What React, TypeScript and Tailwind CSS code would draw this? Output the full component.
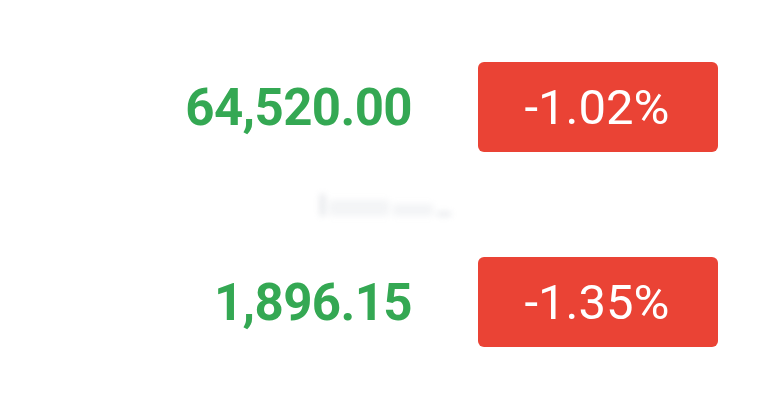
const rows = [
  { price: "64,520.00", change: "-1.02%" },
  { price: "1,896.15", change: "-1.35%" },
];

export default function App() {
  return (
    <div
      className="relative h-[412px] w-[763px] bg-white"
      style={{ fontFamily: "Roboto, 'Liberation Sans', sans-serif" }}
    >
      <div className="grid grid-cols-[412px_240px] gap-x-[66px] gap-y-[105px] pt-[62px]">
        {rows.map((r) => (
          <div key={r.price} className="contents">
            <div className="flex h-[90px] items-center justify-end text-[51px] font-bold leading-none tracking-[-0.6px] text-[#34a853]">
              {r.price}
            </div>
            <div className="flex h-[90px] items-center justify-center rounded-[6px] bg-[#ea4335] pr-[2px] text-[49px] leading-none text-white">
              {r.change}
            </div>
          </div>
        ))}
      </div>

      {/* faint blurred watermark between rows */}
      <div className="absolute left-[320px] top-[194px] flex items-end gap-1 opacity-25 blur-[3px]">
        <span className="h-[22px] w-[5px] bg-gray-400" />
        <span className="h-[16px] w-[60px] bg-gray-300" />
        <span className="h-[12px] w-[40px] bg-gray-300" />
        <span className="h-[4px] w-[14px] bg-gray-400" />
      </div>
    </div>
  );
}
